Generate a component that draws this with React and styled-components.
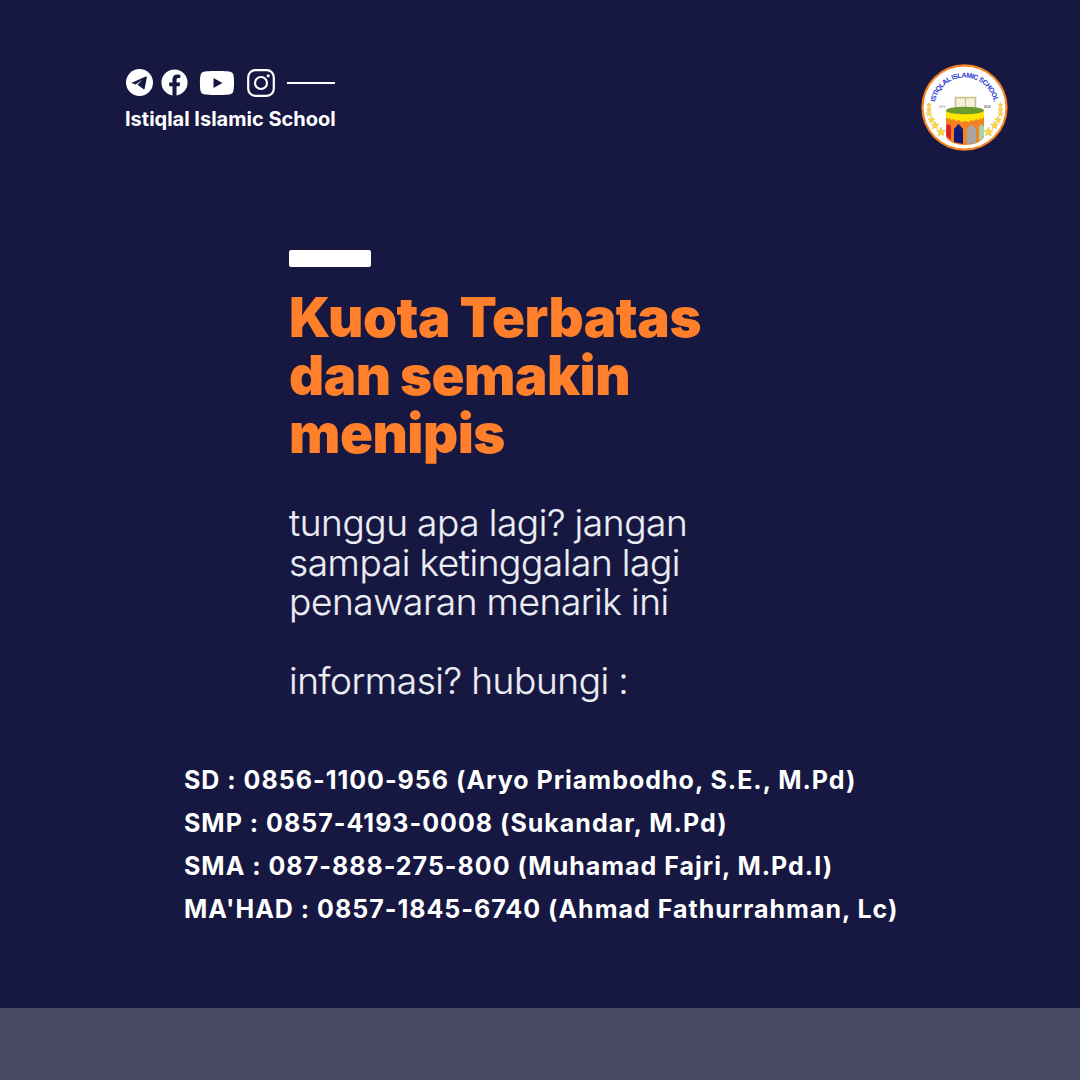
import React from "react";
import styled, { createGlobalStyle } from "styled-components";
import { FaFacebook, FaYoutube } from "react-icons/fa";

const Global = createGlobalStyle`
  html, body { margin: 0; padding: 0; background: #161842; }
`;
const Page = styled.div`
  width: 1080px; height: 1080px; background: #161842; display: flex; flex-direction: column; overflow: hidden;
  color: #fff;
`;
const Header = styled.header`
  display: flex; justify-content: space-between; align-items: flex-start;
  padding: 64px 72px 0 125px; height: 250px; box-sizing: border-box; flex: none;
`;
const Brand = styled.div`
  display: flex; flex-direction: column; gap: 9px; padding-top: 4px;
`;
const Social = styled.div`
  display: flex; align-items: center; height: 29px;
`;
const Rule = styled.span`
  display: block; width: 48px; height: 2px; background: #fff; margin-left: 12px;
`;
const BrandName = styled.div`
  font: 700 20px/26px Inter, "Liberation Sans", sans-serif; white-space: nowrap; letter-spacing: 0;
`;
const Main = styled.main`
  flex: 1; display: flex; flex-direction: column; padding-left: 289px;
`;
const Bar = styled.div`
  width: 82px; height: 17px; background: #fff; border-radius: 2px;
`;
const Title = styled.h1`
  margin: 21px 0 0; font: 900 54.5px/58px Inter, sans-serif; color: #ff7f2a; letter-spacing: -0.5px; word-spacing: -1px;
`;
const Lead = styled.p`
  margin: 41px 0 0; font: 300 37px/39.5px Inter, sans-serif; color: #eceef4; letter-spacing: -0.4px; word-spacing: -0.5px;
  -webkit-text-stroke: 0.2px #eceef4;
`;
const Contacts = styled.ul`
  list-style: none; margin: 0 0 77px; padding: 0 0 0 184px; display: flex; flex-direction: column; flex: none;
`;
const Contact = styled.li`
  font: 700 25px/43px Inter, sans-serif; white-space: nowrap; letter-spacing: 1px;
`;
const Footer = styled.footer`
  height: 72px; background: #484964; flex: none;
`;
const Tele = () => (
  <svg width="27" height="27" viewBox="0 0 28 28" style={{ marginLeft: 1 }}>
    <circle cx="14" cy="14" r="14" fill="#fff" />
    <path d="M5.500 14.500 20.500 7.800c.7-.3 1.300.2 1.100 1l-2.200 11.400c-.2.8-.8 1-1.400.6l-4.300-3.200-1.800-1.300 4.700-5-6.600 4.700-4.500-1.500z" fill="#161842" />
  </svg>
);
const Insta = () => (
  <svg width="28" height="28" viewBox="0 0 28 28" style={{ marginLeft: 12 }}>
    <rect x="1.200" y="1.200" width="25.600" height="25.600" rx="7" fill="none" stroke="#fff" strokeWidth="2.200" />
    <circle cx="14" cy="14" r="6" fill="none" stroke="#fff" strokeWidth="2.200" />
    <circle cx="21.200" cy="6.800" r="1.600" fill="#fff" />
  </svg>
);
const Star = ({ x, y, r }) => {
  const pts = [];
  for (let i = 0; i < 10; i++) {
    const a = -Math.PI / 2 + (i * Math.PI) / 5;
    const q = i % 2 ? r * 0.45 : r;
    pts.push(`${(x + q * Math.cos(a)).toFixed(2)},${(y + q * Math.sin(a)).toFixed(2)}`);
  }
  return <polygon points={pts.join(" ")} fill="#f9d73f" stroke="#d8a21e" strokeWidth=".3" />;
};
const starsL = [[8, 41, 2.600], [8, 45.500, 2.800], [8, 50, 3], [10.500, 56, 3.800], [14, 61.500, 4.300], [20, 68, 5]];
const Logo = () => (
  <svg width="87" height="87" viewBox="0 0 87 87">
    <circle cx="43.500" cy="43.500" r="43.200" fill="#f58220" />
    <circle cx="43.500" cy="43.500" r="41" fill="#fff" />
    <defs><path id="arc" d="M13.500 43.500 A30 30 0 0 1 73.500 43.500" /></defs>
    <text fontFamily="Liberation Sans, sans-serif" fontSize="7" fontWeight="700" fill="#2438d0">
      <textPath href="#arc" startOffset="50%" textAnchor="middle" textLength="83" lengthAdjust="spacing">ISTIQLAL ISLAMIC SCHOOL</textPath>
    </text>
    <text x="18" y="44" fontFamily="Liberation Sans, sans-serif" fontSize="2.800" fill="#777">1974</text>
    <text x="63" y="44" fontFamily="Liberation Sans, sans-serif" fontSize="2.800" fontWeight="700" fill="#555">2014</text>
    {starsL.map(([x, y, r]) => <Star key={y} x={x} y={y} r={r} />)}
    {starsL.map(([x, y, r]) => <Star key={y} x={87.500 - x} y={y} r={r} />)}
    <path d="M34.500 33.500h9l1 1 1-1h9v11.500h-9l-1 1-1-1h-9z" fill="#f5f0dc" stroke="#cdbd85" strokeWidth="1.600" />
    <path d="M44.500 34.500V45" stroke="#cdbd85" strokeWidth="1" />
    <path d="M25 54V46h38v8c-4 5-34 5-38 0z" fill="#ffe600" />
    <ellipse cx="44" cy="46.500" rx="19" ry="3.800" fill="#6d9a2f" />
    <path d="M25 53l2 2 2-1 1 2 3-1 2 2 3-1 2 2 4-1 4 1 2-2 3 1 2-2 3 1 1-2 2 1 2-2v20c-2 4-8 8-19 8s-17-4-19-8z" fill="#f58220" />
    <path d="M25.200 62l2.300-2 2.500 2v13.500c-2-1-4-2.500-4.800-4z" fill="#d8232a" />
    <path d="M33 78V65l4.500-5 4.500 5v15z" fill="#0f1a70" />
    <path d="M46 80V65l4.500-5 4.500 5v14z" fill="#a6a6a6" />
    <path d="M58 77V63l2.500-3 2.500 3v9c-1 2-2.500 4-5 5z" fill="#a4d6ae" />
  </svg>
);

export default function App() {
  return (
    <Page>
      <Global />
      <Header>
        <Brand>
          <Social>
            <Tele />
            <FaFacebook size={27} style={{ marginLeft: 8 }} />
            <FaYoutube size={36} style={{ marginLeft: 11 }} />
            <Insta />
            <Rule />
          </Social>
          <BrandName>Istiqlal Islamic School</BrandName>
        </Brand>
        <Logo />
      </Header>
      <Main>
        <Bar />
        <Title>Kuota Terbatas<br />dan semakin<br />menipis</Title>
        <Lead>tunggu apa lagi? jangan<br />sampai ketinggalan lagi<br />penawaran menarik ini<br /><br />informasi? hubungi :</Lead>
      </Main>
      <Contacts>
        <Contact>SD : 0856-1100-956 (Aryo Priambodho, S.E., M.Pd)</Contact>
        <Contact>SMP : 0857-4193-0008 (Sukandar, M.Pd)</Contact>
        <Contact>SMA : 087-888-275-800 (Muhamad Fajri, M.Pd.I)</Contact>
        <Contact>MA'HAD : 0857-1845-6740 (Ahmad Fathurrahman, Lc)</Contact>
      </Contacts>
      <Footer />
    </Page>
  );
}
